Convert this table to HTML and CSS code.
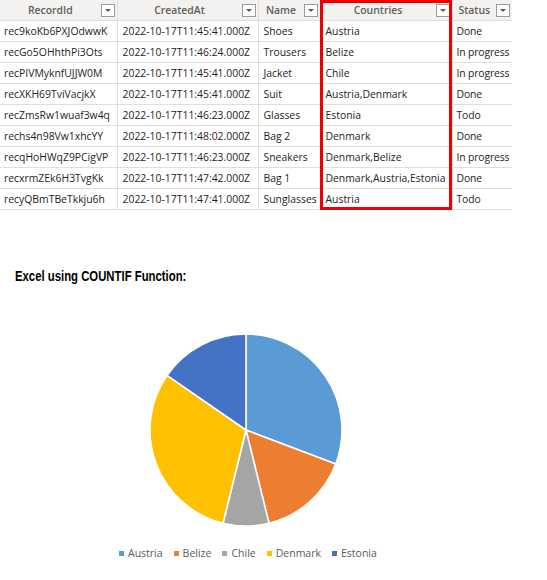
FILE: index.html
```html
<!DOCTYPE html>
<html>
<head>
<meta charset="utf-8">
<link rel="stylesheet" href="styles.css">
</head>
<body>
<div class="grid-wrap">
  <table class="grid">
    <colgroup>
      <col class="c1"><col class="c2"><col class="c3"><col class="c4"><col class="c5">
    </colgroup>
    <thead>
      <tr>
        <th><div class="hd"><span class="lbl">RecordId</span><span class="flt"></span></div></th>
        <th><div class="hd"><span class="lbl">CreatedAt</span><span class="flt"></span></div></th>
        <th><div class="hd"><span class="lbl">Name</span><span class="flt"></span></div></th>
        <th><div class="hd"><span class="lbl">Countries</span><span class="flt"></span></div></th>
        <th><div class="hd"><span class="lbl">Status</span><span class="flt"></span></div></th>
      </tr>
    </thead>
    <tbody>
      <tr><td>rec9koKb6PXJOdwwK</td><td>2022-10-17T11:45:41.000Z</td><td>Shoes</td><td>Austria</td><td>Done</td></tr>
      <tr><td>recGo5OHhthPi3Ots</td><td>2022-10-17T11:46:24.000Z</td><td>Trousers</td><td>Belize</td><td>In progress</td></tr>
      <tr><td>recPIVMyknfUJJW0M</td><td>2022-10-17T11:45:41.000Z</td><td>Jacket</td><td>Chile</td><td>In progress</td></tr>
      <tr><td>recXKH69TviVacjkX</td><td>2022-10-17T11:45:41.000Z</td><td>Suit</td><td>Austria,Denmark</td><td>Done</td></tr>
      <tr><td>recZmsRw1wuaf3w4q</td><td>2022-10-17T11:46:23.000Z</td><td>Glasses</td><td>Estonia</td><td>Todo</td></tr>
      <tr><td>rechs4n98Vw1xhcYY</td><td>2022-10-17T11:48:02.000Z</td><td>Bag 2</td><td>Denmark</td><td>Done</td></tr>
      <tr><td>recqHoHWqZ9PCigVP</td><td>2022-10-17T11:46:23.000Z</td><td>Sneakers</td><td>Denmark,Belize</td><td>In progress</td></tr>
      <tr><td>recxrmZEk6H3TvgKk</td><td>2022-10-17T11:47:42.000Z</td><td>Bag 1</td><td>Denmark,Austria,Estonia</td><td>Done</td></tr>
      <tr><td>recyQBmTBeTkkju6h</td><td>2022-10-17T11:47:41.000Z</td><td>Sunglasses</td><td>Austria</td><td>Todo</td></tr>
    </tbody>
  </table>
  <div class="highlight"></div>
</div>

<section class="chart">
  <h2 class="title">Excel using COUNTIF Function:</h2>
  <div class="pie-row">
    <svg class="pie" width="200" height="200" viewBox="146 330 200 200">
      <g stroke="#ffffff" stroke-width="1.6" stroke-linejoin="round">
        <path fill="#5b9bd5" d="M246 430 L246 334 A96 96 0 0 1 335.75 464.04 Z"/>
        <path fill="#ed7d31" d="M246 430 L335.75 464.04 A96 96 0 0 1 268.97 523.21 Z"/>
        <path fill="#a5a5a5" d="M246 430 L268.97 523.21 A96 96 0 0 1 223.03 523.21 Z"/>
        <path fill="#ffc000" d="M246 430 L223.03 523.21 A96 96 0 0 1 166.99 375.46 Z"/>
        <path fill="#4472c4" d="M246 430 L166.99 375.46 A96 96 0 0 1 246 334 Z"/>
      </g>
    </svg>
  </div>
  <ul class="legend">
    <li><span class="sw sw-a"></span>Austria</li>
    <li><span class="sw sw-b"></span>Belize</li>
    <li><span class="sw sw-c"></span>Chile</li>
    <li><span class="sw sw-d"></span>Denmark</li>
    <li><span class="sw sw-e"></span>Estonia</li>
  </ul>
</section>
</body>
</html>
```

FILE: styles.css
```css
html, body {
  margin: 0;
  padding: 0;
  background: #ffffff;
}
body {
  width: 547px;
  font-family: "Open Sans", "Noto Sans", sans-serif;
}
.grid-wrap {
  position: relative;
  width: 512px;
}
.grid {
  border-collapse: collapse;
  table-layout: fixed;
  width: 512px;
  font-size: 10.4px;
  color: #252423;
}
.c1 { width: 117px; }
.c2 { width: 141px; }
.c3 { width: 62px; }
.c4 { width: 132px; }
.c5 { width: 60px; }
.grid th {
  height: 20px;
  padding: 0;
  background: #f3f2f1;
  border-right: 1px solid #e1dfdd;
  border-bottom: 1px solid #e1dfdd;
  font-weight: 600;
  color: #605e5c;
  box-sizing: border-box;
}
.grid th:last-child,
.grid td:last-child { border-right: none; }
.hd {
  display: flex;
  align-items: center;
  height: 20px;
  padding-right: 2px;
}
.lbl {
  flex: 1;
  text-align: center;
  white-space: nowrap;
}
.flt {
  position: relative;
  width: 14px;
  height: 13px;
  border: 1px solid #9d9b99;
  background: #ffffff;
  box-sizing: border-box;
  flex: none;
}
.flt::after {
  content: "";
  position: absolute;
  left: 3px;
  top: 4px;
  border-left: 3.5px solid transparent;
  border-right: 3.5px solid transparent;
  border-top: 3.5px solid #605e5c;
}
.grid td {
  height: 21px;
  padding: 0 0 0 4px;
  border-right: 1px solid #e1dfdd;
  border-bottom: 1px solid #e1dfdd;
  white-space: nowrap;
  overflow: hidden;
  box-sizing: border-box;
}
.grid td:nth-child(n+2) { padding-left: 5px; }
.grid td:nth-child(5) { padding-left: 4px; letter-spacing: -0.15px; }
.highlight {
  position: absolute;
  left: 320px;
  top: 0;
  width: 132px;
  height: 210px;
  border: 3px solid #ee0000;
  box-sizing: border-box;
  pointer-events: none;
}
.chart {
  padding-top: 58px;
}
.title {
  margin: 0 0 0 15px;
  font-family: "Liberation Sans", Arial, sans-serif;
  font-weight: bold;
  font-size: 14px;
  line-height: 16px;
  color: #000000;
  transform: scaleX(0.81);
  transform-origin: left center;
  white-space: nowrap;
}
.pie-row {
  padding: 46px 0 0 146px;
  height: 200px;
}
.pie { display: block; }
.legend {
  list-style: none;
  margin: 15px 0 0 119px;
  padding: 0;
  display: flex;
  gap: 11px;
  font-size: 10.5px;
  color: #595959;
  line-height: 16px;
}
.legend li {
  display: flex;
  align-items: center;
}
.sw {
  width: 5px;
  height: 5px;
  margin-right: 4px;
}
.sw-a { background: #5b9bd5; }
.sw-b { background: #ed7d31; }
.sw-c { background: #a5a5a5; }
.sw-d { background: #ffc000; }
.sw-e { background: #4472c4; }
```
